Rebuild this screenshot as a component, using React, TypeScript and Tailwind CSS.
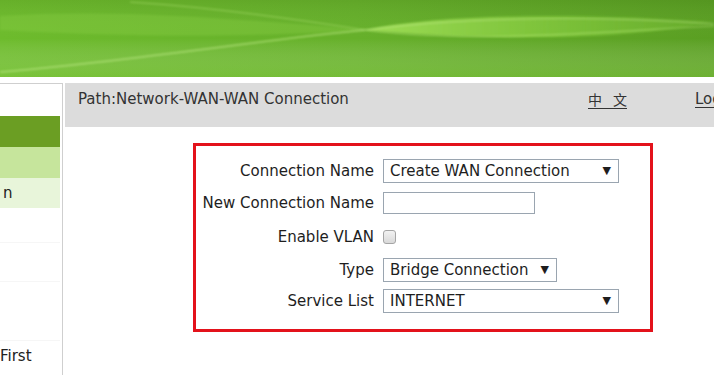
import React from "react";

function Banner() {
  return (
    <div className="h-[77px] w-full overflow-hidden">
      <svg width="714" height="77" viewBox="0 0 714 77">
        <defs>
          <linearGradient id="bg" x1="0" y1="0" x2="1" y2="0">
            <stop offset="0" stopColor="#6dbb2c" />
            <stop offset="0.5" stopColor="#66b02a" />
            <stop offset="1" stopColor="#5a9f22" />
          </linearGradient>
          <linearGradient id="shade" x1="0" y1="0" x2="0" y2="1">
            <stop offset="0" stopColor="#000" stopOpacity="0.06" />
            <stop offset="0.5" stopColor="#fff" stopOpacity="0" />
            <stop offset="1" stopColor="#8fd14f" stopOpacity="0.35" />
          </linearGradient>
          <linearGradient id="lens" x1="0" y1="0" x2="1" y2="0">
            <stop offset="0" stopColor="#a6e35c" stopOpacity="0.85" />
            <stop offset="0.6" stopColor="#8ed444" stopOpacity="0.55" />
            <stop offset="1" stopColor="#8ed444" stopOpacity="0.2" />
          </linearGradient>
          <filter id="soft">
            <feGaussianBlur stdDeviation="0.8" />
          </filter>
        </defs>
        <rect width="714" height="77" fill="url(#bg)" />
        <rect width="714" height="77" fill="url(#shade)" />
        <path d="M0 16 C 120 8, 250 20, 365 30 C 300 34, 180 40, 0 30 Z" fill="#8ed24a" opacity="0.3" filter="url(#soft)" />
        <path d="M365 30 C 450 12, 600 14, 714 22 C 620 42, 470 40, 365 30 Z" fill="url(#lens)" filter="url(#soft)" />
        <path d="M0 72 C 140 60, 260 40, 365 30" stroke="#c8f090" strokeWidth="1.5" fill="none" opacity="0.6" filter="url(#soft)" />
        <path d="M130 2 C 220 8, 300 20, 365 30 C 470 44, 600 32, 714 26" stroke="#b8ea7a" strokeWidth="1.2" fill="none" opacity="0.55" filter="url(#soft)" />
        <path d="M365 30 C 470 16, 610 16, 714 24" stroke="#d2f5a0" strokeWidth="1" fill="none" opacity="0.5" filter="url(#soft)" />
      </svg>
    </div>
  );
}

function Sidebar() {
  return (
    <div className="w-[63px] shrink-0 border-t border-r border-[#cfcfcf] h-full">
      <div className="h-[32px]" />
      <div className="h-[31px] w-[60px] bg-[#6b9e23]" />
      <div className="h-[31px] w-[60px] bg-[#c6e59c]" />
      <div className="h-[30px] w-[60px] bg-[#e8f5da] flex items-center pl-[3px] pt-[1px] text-[15px] text-[#222]">n</div>
      <div className="h-[35px] w-[60px] border-b border-[#f6f6f6]" />
      <div className="h-[39px] w-[60px] border-b border-[#f6f6f6]" />
      <div className="h-[59px] w-[60px] border-b border-[#f6f6f6]" />
      <div className="h-[30px] w-[60px] flex items-center text-[15px] text-[#222]">First</div>
    </div>
  );
}

function SelectBox({ value, width }: { value: string; width: string }) {
  return (
    <div className={`${width} h-[24px] border border-[#9aa5b0] bg-white flex items-center justify-between pl-[6px] pr-[7px]`}>
      <span>{value}</span>
      <span className="text-[11px]">▼</span>
    </div>
  );
}

function FormRow({ label, height, children }: { label: string; height: string; children: React.ReactNode }) {
  return (
    <div className={`flex items-center ${height}`}>
      <div className="w-[178px] text-right">{label}</div>
      <div className="ml-[9px] flex items-center">{children}</div>
    </div>
  );
}

export default function App() {
  return (
    <div className="w-[714px] h-[375px] overflow-hidden bg-white font-['DejaVu_Sans',sans-serif] text-[15px] text-[#1e1e1e]">
      <Banner />
      <div className="flex mt-[6px] h-[292px]">
        <Sidebar />
        <div className="ml-[2px] flex-1 min-w-0">
          <div className="h-[44px] bg-[#dcdcdc] flex items-start pt-[6px] text-[#333] whitespace-nowrap">
            <span className="ml-[13px] leading-[20px]">Path:Network-WAN-WAN Connection</span>
            <span className="ml-auto mr-[68px] mt-[1px] flex gap-[11px] border-b border-[#333] leading-[18px] font-['Noto_Sans_CJK_SC',sans-serif] text-[14px]">
              <span>中</span>
              <span>文</span>
            </span>
            <span className="leading-[20px] underline underline-offset-[3px] w-[19px] overflow-hidden">Logout</span>
          </div>
          <div className="ml-[128px] mt-[16px] w-[460px] border-[3px] border-[#e3121b] pt-[9px] pb-[12px]">
            <FormRow label="Connection Name" height="h-[32px]">
              <SelectBox value="Create WAN Connection" width="w-[236px]" />
            </FormRow>
            <FormRow label="New Connection Name" height="h-[32px]">
              <div className="w-[152px] h-[22px] border border-[#9aa5b0] bg-white" />
            </FormRow>
            <FormRow label="Enable VLAN" height="h-[36px]">
              <div className="w-[13px] h-[14px] rounded-[3px] border border-[#a5a5a5] bg-gradient-to-b from-[#f2f2f2] to-[#d9d9d9]" />
            </FormRow>
            <FormRow label="Type" height="h-[30px]">
              <SelectBox value="Bridge Connection" width="w-[174px]" />
            </FormRow>
            <FormRow label="Service List" height="h-[32px]">
              <SelectBox value="INTERNET" width="w-[236px]" />
            </FormRow>
          </div>
        </div>
      </div>
    </div>
  );
}
